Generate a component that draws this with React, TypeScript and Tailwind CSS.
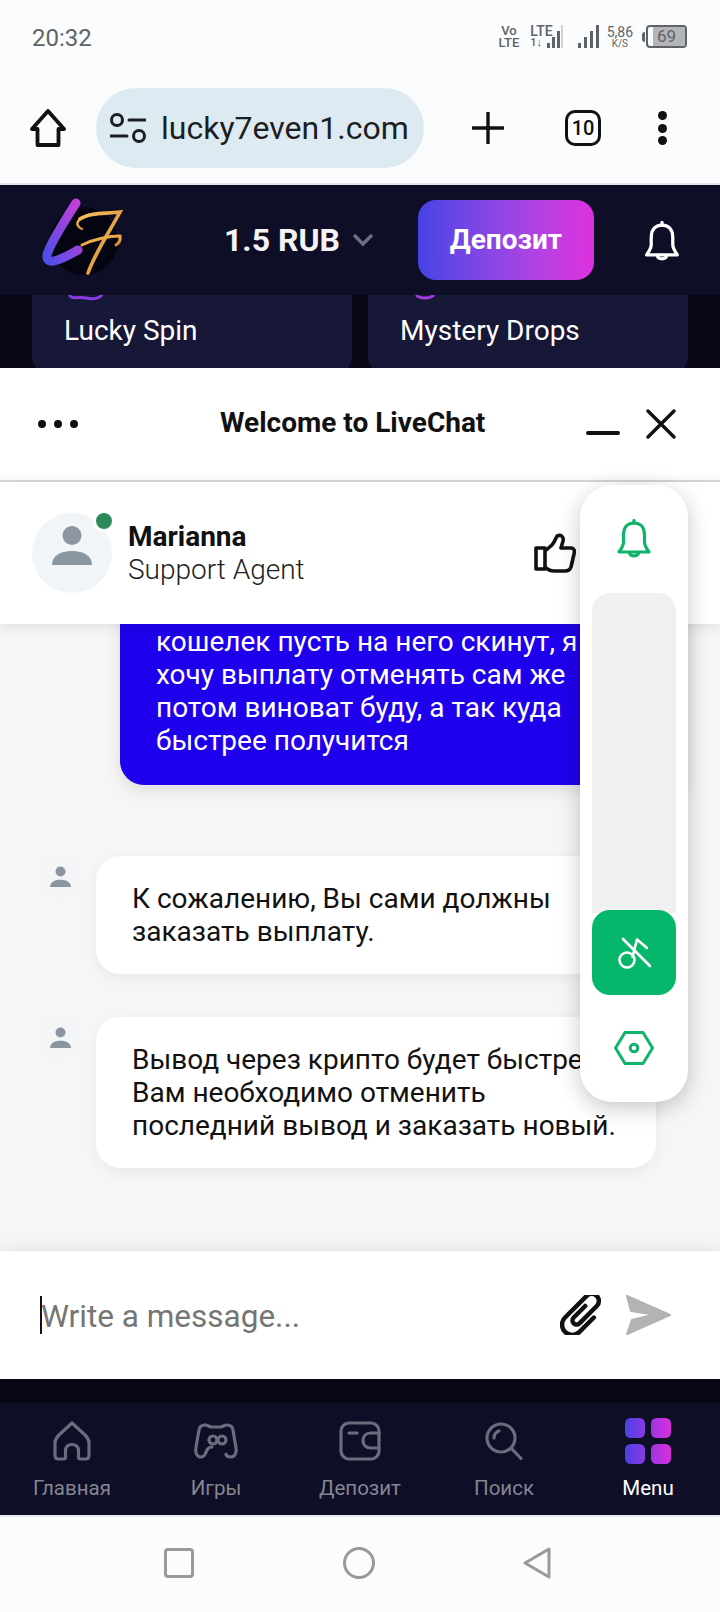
const GRAD = "bg-gradient-to-r from-[#4641e6] to-[#df2fdf]";

function Bell({ color, className }: { color: string; className: string }) {
  return (
    <svg viewBox="0 0 34 40" fill="none" stroke={color} strokeWidth="3.2" strokeLinecap="round" strokeLinejoin="round" className={className}>
      <path d="M17 1.5V4" />
      <path d="M17 4C10 4 6.5 9 6.5 16V23C6.5 27 4 30 2 33H32C30 30 27.5 27 27.5 23V16C27.5 9 24 4 17 4Z" />
      <path d="M12.5 33.5C13 38 21 38 21.5 33.5" />
    </svg>
  );
}

function Person({ className }: { className: string }) {
  return (
    <svg viewBox="0 0 40 40" fill="#8c96a0" className={className}>
      <ellipse cx="20" cy="10.5" rx="9.5" ry="9.5" />
      <path d="M0 40C0 31 8 26 20 26C32 26 40 31 40 40Z" />
    </svg>
  );
}

function StatusBar() {
  return (
    <div className="flex h-[72px] items-start justify-between pl-8 pr-[33px] pt-[25px] text-[#5f6368]">
      <span className="text-[24px] leading-[26px]">20:32</span>
      <div className="flex items-start">
        <div className="flex flex-col text-[13px] font-medium leading-[12px]">
          <span className="text-center">Vo</span>
          <span>LTE</span>
        </div>
        <div className="ml-[11px] flex flex-col text-[14px] font-medium leading-[12px]">
          <span>LTE</span>
          <span className="text-[11px]">1↓</span>
        </div>
        <svg viewBox="0 0 16 24" className="-ml-[6px] h-6 w-4" fill="#5f6368">
          <rect x="0" y="18" width="3" height="5" />
          <rect x="5" y="12" width="3" height="11" />
          <rect x="10" y="6" width="3" height="17" />
          <rect x="14" y="0" width="2" height="23" fill="#d0d2d4" />
        </svg>
        <svg viewBox="0 0 22 24" className="ml-[15px] h-6 w-[22px]" fill="#5f6368">
          <rect x="0" y="18" width="3" height="5" />
          <rect x="6" y="12" width="3" height="11" />
          <rect x="12" y="6" width="3" height="17" />
          <rect x="18" y="0" width="3" height="23" />
        </svg>
        <div className="ml-[7px] flex flex-col items-center text-[14px] leading-[14px]">
          <span>5,86</span>
          <span className="text-[10px] leading-[9px]">K/S</span>
        </div>
        <div className="ml-[9px] flex items-center">
          <span className="h-[10px] w-[3px] rounded-l-sm bg-[#5f6368]" />
          <div className="relative ml-[1px] flex h-[23px] w-[41px] items-center justify-center overflow-hidden rounded-[4px] border-2 border-[#5f6368] text-[17px]">
            <span className="absolute inset-y-0 right-0 w-[32px] bg-[#b4b5b7]" />
            <span className="relative">69</span>
          </div>
        </div>
      </div>
    </div>
  );
}

function BrowserBar() {
  return (
    <div className="flex h-[113px] items-start border-b-2 border-[#e3e6ea] pl-[30px] pt-[16px]">
      <svg viewBox="0 0 36 38" fill="none" stroke="#111" strokeWidth="3.8" strokeLinejoin="round" className="mt-[21px] h-[38px] w-[36px]">
        <path d="M18 2L34 20H28.5V36H7.5V20H2Z" />
      </svg>
      <div className="ml-[30px] flex h-[80px] w-[328px] items-center rounded-full bg-[#deeaf1] pl-[14px]">
        <svg viewBox="0 0 36 30" fill="none" stroke="#1b1f23" strokeWidth="3" strokeLinecap="round" className="h-[30px] w-9 shrink-0">
          <circle cx="7" cy="7" r="5.5" />
          <path d="M19 7H35" />
          <path d="M1 23H17" />
          <circle cx="29" cy="23" r="5.5" />
        </svg>
        <span className="ml-[15px] text-[32px] text-[#1b1f23]">lucky7even1.com</span>
      </div>
      <svg viewBox="0 0 32 32" fill="none" stroke="#111" strokeWidth="3.4" strokeLinecap="round" className="ml-[48px] mt-[24px] h-8 w-8">
        <path d="M16 1V31M1 16H31" />
      </svg>
      <div className="ml-[61px] mt-[22px] flex h-[36px] w-[36px] items-center justify-center rounded-[10px] border-[3.5px] border-[#111] text-[20px] font-medium text-[#111]">
        10
      </div>
      <div className="ml-[57px] mt-[23px] flex h-[34px] flex-col justify-between">
        <span className="h-[9px] w-[9px] rounded-full bg-[#111]" />
        <span className="h-[9px] w-[9px] rounded-full bg-[#111]" />
        <span className="h-[9px] w-[9px] rounded-full bg-[#111]" />
      </div>
    </div>
  );
}

function Logo() {
  return (
    <svg viewBox="0 0 90 90" fill="none" strokeLinecap="round" className="h-[90px] w-[90px]">
      <defs>
        <linearGradient id="lg-l" x1="0" y1="1" x2="1" y2="0">
          <stop offset="0" stopColor="#4c4fe8" />
          <stop offset="1" stopColor="#c53fd9" />
        </linearGradient>
        <linearGradient id="lg-7" x1="0" y1="0" x2="1" y2="1">
          <stop offset="0" stopColor="#f7c25e" />
          <stop offset="1" stopColor="#d98a2e" />
        </linearGradient>
      </defs>
      <circle cx="46" cy="46" r="34" fill="#050512" />
      <path d="M38 8C28 24 12 48 9 60C8 69 16 69 40 55" stroke="url(#lg-l)" strokeWidth="9" />
      <path d="M42 24C52 17 68 19 82 17C72 36 58 56 50 78" stroke="url(#lg-7)" strokeWidth="3.6" />
      <path d="M42 24C37 29 40 32 44 34" stroke="url(#lg-7)" strokeWidth="2.4" />
      <path d="M44 50C56 44 72 41 82 41C83 46 81 48 78 50" stroke="url(#lg-7)" strokeWidth="3" />
    </svg>
  );
}

function SiteHeader() {
  return (
    <div className="flex h-[110px] items-center bg-[#0e0e27] pl-[38px]">
      <Logo />
      <span className="ml-[96px] text-[32px] font-bold text-[#f4f4f6]">1.5 RUB</span>
      <svg viewBox="0 0 22 14" fill="none" stroke="#6f6f80" strokeWidth="3.4" className="ml-[12px] h-[14px] w-[22px]">
        <path d="M2 2L11 11L20 2" />
      </svg>
      <div className={`ml-[44px] flex h-[80px] w-[176px] items-center justify-center rounded-[18px] text-[28px] font-bold text-white ${GRAD}`}>
        Депозит
      </div>
      <Bell color="#fff" className="ml-[50px] mt-[3px] h-[41px] w-[36px]" />
    </div>
  );
}

function PromoStrip() {
  return (
    <div className="flex h-[73px] gap-4 overflow-hidden bg-[#070718] px-8">
      <div className="h-[78px] w-[320px] rounded-b-2xl bg-[#171738] text-[28px] text-white">
        <svg viewBox="0 0 36 6" fill="none" stroke="#8a3be6" strokeWidth="3" className="ml-[36px] h-[6px] w-9">
          <path d="M1 -2C2 6 10 1 18 3C26 5 33 3 35 -2" />
        </svg>
        <div className="ml-8 mt-[14px] leading-[32px]">Lucky Spin</div>
      </div>
      <div className="h-[78px] w-[320px] rounded-b-2xl bg-[#171738] text-[28px] text-white">
        <svg viewBox="0 0 20 6" fill="none" stroke="#a13ce0" strokeWidth="3" className="ml-[47px] h-[6px] w-5">
          <path d="M1 0C5 4 15 4 19 0" />
        </svg>
        <div className="ml-8 mt-[14px] leading-[32px]">Mystery Drops</div>
      </div>
    </div>
  );
}

function FloatingPanel() {
  return (
    <div className="absolute right-8 top-[117px] z-20 flex h-[617px] w-[108px] flex-col items-center rounded-[32px] bg-white shadow-[0_6px_22px_rgba(0,0,0,0.22)]">
      <Bell color="#0fb36a" className="mt-[34px] h-10 w-[34px]" />
      <div className="mt-[34px] h-[320px] w-[84px] rounded-t-[18px] bg-[#f0f0f0]" />
      <div className="-mt-[3px] flex h-[85px] w-[84px] items-center justify-center rounded-[18px] bg-[#06b76b]">
        <svg viewBox="0 0 34 34" fill="none" stroke="#fff" strokeWidth="2.6" strokeLinecap="round" strokeLinejoin="round" className="h-[34px] w-[34px]">
          <circle cx="10" cy="24" r="7.5" />
          <path d="M6 3L33 30" />
          <path d="M15.5 21L20 3.5L30 12" />
        </svg>
      </div>
      <svg viewBox="0 0 40 34" fill="none" stroke="#0fb36a" strokeWidth="3" strokeLinejoin="round" className="mt-[36px] h-[34px] w-10">
        <path d="M11 1.5H29L38.5 17L29 32.5H11L1.5 17Z" />
        <circle cx="20" cy="17" r="3.8" />
      </svg>
    </div>
  );
}

function ChatHeader() {
  return (
    <>
      <div className="flex h-[112px] items-center bg-white">
        <div className="ml-[38px] flex w-[40px] justify-between">
          <span className="h-2 w-2 rounded-full bg-[#111]" />
          <span className="h-2 w-2 rounded-full bg-[#111]" />
          <span className="h-2 w-2 rounded-full bg-[#111]" />
        </div>
        <span className="ml-[142px] w-[266px] -translate-y-[1px] text-[28px] font-bold whitespace-nowrap text-[#111]">Welcome to LiveChat</span>
        <span className="ml-[100px] mt-[18px] h-1 w-[34px] rounded-full bg-[#111]" />
        <svg viewBox="0 0 30 30" fill="none" stroke="#111" strokeWidth="3.4" strokeLinecap="round" className="ml-[26px] h-[30px] w-[30px]">
          <path d="M2 2L28 28M28 2L2 28" />
        </svg>
      </div>
      <div className="h-[2px] bg-[#d9d9d9]" />
      <div className="relative z-10 flex h-[142px] items-center bg-white pl-8 shadow-[0_2px_14px_rgba(0,0,0,0.1)]">
        <div className="relative flex h-20 w-20 shrink-0 items-end justify-center rounded-full bg-[#f1f5f8] pb-[28px]">
          <Person className="h-[40px] w-[40px]" />
          <span className="absolute -right-[3px] -top-[3px] h-[22px] w-[22px] rounded-full border-[3px] border-white bg-[#2b8a57]" />
        </div>
        <div className="ml-4 flex w-[176px] flex-col whitespace-nowrap">
          <span className="text-[28px] font-bold leading-[33px] text-[#111]">Marianna</span>
          <span className="text-[28px] font-light leading-[33px] text-[#222]">Support Agent</span>
        </div>
        <svg viewBox="0 0 42 40" fill="none" stroke="#111" strokeWidth="3.6" strokeLinejoin="round" className="ml-[230px] h-10 w-[42px]">
          <path d="M2 15H11V36H2Z" />
          <path d="M11 18L18 12C21 8 22 5 23 3C27 1 30 4 29 8L27 15H37C40 15 41 18 40 21L37 34C36 37 34 38 31 38H20C16 38 14 37 11 34" />
        </svg>
      </div>
    </>
  );
}

function Messages() {
  return (
    <div className="flex flex-1 flex-col justify-end overflow-hidden bg-[#f6f6f7] pb-[83px] text-[28px] leading-[33px]">
      <div className="ml-[120px] w-[568px] rounded-bl-3xl bg-[#1f00ec] pl-9 pb-7 pt-10 text-white shadow-[0_6px_16px_rgba(0,0,0,0.1)]">
        <div className="w-[440px]">кошелек пусть на него скинут, я хочу выплату отменять сам же потом виноват буду, а так куда быстрее получится</div>
      </div>
      <div className="mt-[71px] flex pl-10">
        <div className="mt-[1px] flex h-10 w-10 shrink-0 items-start justify-center rounded-full bg-[#f3f5f7] pt-[9px]">
          <Person className="h-[21px] w-[21px]" />
        </div>
        <div className="ml-4 w-[504px] rounded-3xl bg-white px-9 py-[26px] text-[#111] shadow-[0_4px_14px_rgba(0,0,0,0.06)]">
          К сожалению, Вы сами должны заказать выплату.
        </div>
      </div>
      <div className="mt-[43px] flex pl-10">
        <div className="mt-[1px] flex h-10 w-10 shrink-0 items-start justify-center rounded-full bg-[#f3f5f7] pt-[9px]">
          <Person className="h-[21px] w-[21px]" />
        </div>
        <div className="ml-4 w-[560px] rounded-3xl bg-white px-9 py-[26px] text-[#111] shadow-[0_4px_14px_rgba(0,0,0,0.06)]">
          Вывод через крипто будет быстрее. Вам необходимо отменить последний вывод и заказать новый.
        </div>
      </div>
    </div>
  );
}

function Composer() {
  return (
    <div className="relative z-10 flex h-[128px] items-center bg-white pl-10 shadow-[0_-3px_12px_rgba(0,0,0,0.07)]">
      <span className="h-[38px] w-[2px] bg-[#111]" />
      <span className="-ml-[1px] w-[258px] translate-y-[2px] text-[31.5px] whitespace-nowrap text-[#757575]">Write a message...</span>
      <svg viewBox="0 0 44 40" fill="none" stroke="#111" strokeWidth="4.4" strokeLinecap="round" className="ml-[261px] h-10 w-11">
        <g transform="translate(22 20) scale(1.02) rotate(45) translate(-24 -18.5)">
          <path d="M34 12V32A10 10 0 0 1 14 32V2A7 7 0 0 1 28 2V26A4 4 0 0 1 20 26V10" />
        </g>
      </svg>
      <svg viewBox="0 0 46 42" fill="#b3b3b3" stroke="#b3b3b3" strokeWidth="2" strokeLinejoin="round" className="ml-[21px] h-[42px] w-[46px]">
        <path d="M2 2L45 21L2 40L7 26L29 20.5L6 17Z" />
      </svg>
    </div>
  );
}

function NavItem({ label, active, children }: { label: string; active?: boolean; children: React.ReactNode }) {
  return (
    <div className="flex w-[144px] flex-col items-center">
      <div className="flex h-[54px] items-center">{children}</div>
      <span className={`mt-[7px] text-[20.5px] leading-[26px] ${active ? "text-white" : "text-[#85858f]"}`}>{label}</span>
    </div>
  );
}

function BottomNav() {
  const stroke = { fill: "none", stroke: "#6c6c7c", strokeWidth: 3.2, strokeLinecap: "round" as const, strokeLinejoin: "round" as const };
  return (
    <div className="flex h-[112px] bg-[#0e0e27] pt-[11px]">
      <NavItem label="Главная">
        <svg viewBox="0 0 38 40" className="h-10 w-[38px]" {...stroke}>
          <path d="M19 2L32 14C34.5 16.5 36 18 36 22V34C36 37 35 38 33 38H27C26 38 25.5 37 25.5 36V30C25.5 26 23 23.5 19 23.5C15 23.5 12.5 26 12.5 30V36C12.5 37 12 38 11 38H5C3 38 2 37 2 34V22C2 18 3.5 16.5 6 14Z" />
        </svg>
      </NavItem>
      <NavItem label="Игры">
        <svg viewBox="0 0 44 36" className="h-9 w-11" {...stroke}>
          <path d="M11 2C7 2 5.5 4 5 7L2 24C1 30 3 34 7 34C10 34 11 32 13 27C14 25 15 24 18 24" />
          <path d="M11 2C14 2 15 4 18 4H26C29 4 30 2 33 2C37 2 38.5 4 39 7L42 25C43 31 40 34 37 34C34 34 32 33 32 31" />
          <circle cx="19" cy="17" r="4" />
          <circle cx="28" cy="17" r="4" />
        </svg>
      </NavItem>
      <NavItem label="Депозит">
        <svg viewBox="0 0 42 40" className="h-10 w-[42px]" {...stroke}>
          <rect x="2" y="2" width="38" height="36" rx="8" />
          <path d="M10 12H18" />
          <path d="M40 12H32C27 12 24 15 24 19.5C24 24 27 27 32 27H40" />
        </svg>
      </NavItem>
      <NavItem label="Поиск">
        <svg viewBox="0 0 38 38" className="h-[38px] w-[38px]" {...stroke}>
          <circle cx="16" cy="16" r="14" />
          <path d="M26.5 26.5L36 36.5" />
          <path d="M9 16C9 12 11 10 14 9" />
        </svg>
      </NavItem>
      <NavItem label="Menu" active>
        <svg viewBox="0 0 46 46" className="h-[46px] w-[46px]">
          <defs>
            <linearGradient id="menu-g" gradientUnits="userSpaceOnUse" x1="0" y1="0" x2="46" y2="0">
              <stop offset="0" stopColor="#4a41e6" />
              <stop offset="1" stopColor="#dc2fde" />
            </linearGradient>
          </defs>
          <rect x="0" y="0" width="20" height="20" rx="5.5" fill="url(#menu-g)" />
          <rect x="26" y="0" width="20" height="20" rx="5.5" fill="url(#menu-g)" />
          <rect x="0" y="26" width="20" height="20" rx="5.5" fill="url(#menu-g)" />
          <rect x="26" y="26" width="20" height="20" rx="5.5" fill="url(#menu-g)" />
        </svg>
      </NavItem>
    </div>
  );
}

function AndroidNav() {
  return (
    <div className="flex flex-1 items-start justify-center border-t-2 border-[#e6e8ee] pt-[30px]">
      <svg viewBox="0 0 30 30" fill="none" stroke="#999" strokeWidth="3" className="-ml-[5px] h-8 w-[30px]">
        <rect x="1.5" y="1.5" width="27" height="27" rx="2.5" />
      </svg>
      <svg viewBox="0 0 32 32" fill="none" stroke="#999" strokeWidth="3" className="ml-[149px] h-8 w-8">
        <circle cx="16" cy="16" r="14.5" />
      </svg>
      <svg viewBox="0 0 28 32" fill="none" stroke="#999" strokeWidth="3" strokeLinejoin="round" className="ml-[148px] h-8 w-7">
        <path d="M26 2V30L2 16Z" />
      </svg>
    </div>
  );
}

export default function App() {
  return (
    <div className="flex h-[1612px] w-[720px] flex-col overflow-hidden bg-[#fbfcfe] font-[Roboto,sans-serif]">
      <StatusBar />
      <BrowserBar />
      <SiteHeader />
      <PromoStrip />
      <div className="relative flex h-[1011px] flex-col">
        <ChatHeader />
        <Messages />
        <Composer />
        <FloatingPanel />
      </div>
      <div className="h-6 shrink-0 bg-[#070718]" />
      <BottomNav />
      <AndroidNav />
    </div>
  );
}
